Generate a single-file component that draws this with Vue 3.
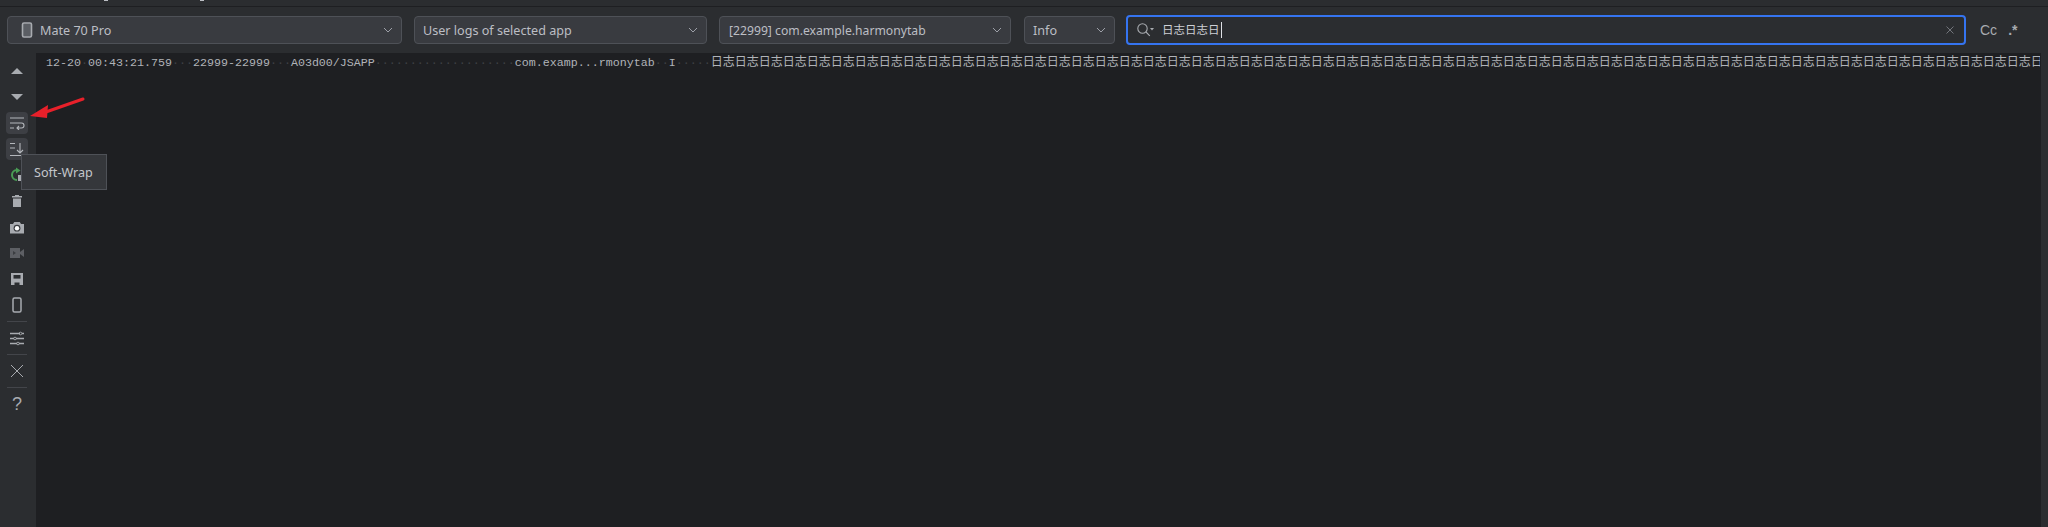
<script setup>
const dots = (n) => '·'.repeat(n);
const logText = '日志'.repeat(60);
</script>

<template>
  <div class="page">
    <div class="topstrip">
      <span class="clip c1"></span>
      <span class="clip c2"></span>
    </div>
    <header class="toolbar">
      <div class="select device">
        <svg class="phone" width="14" height="16" viewBox="0 0 14 16"><rect x="3" y="1.5" width="8" height="13" fill="#5b5e64"/><rect x="2.5" y="1" width="9" height="14" rx="1.5" fill="none" stroke="#a8abb0" stroke-width="1.6"/></svg>
        <span class="label">Mate 70 Pro</span>
        <svg class="chev" width="10" height="6" viewBox="0 0 10 6"><path d="M1 1l4 4 4-4" fill="none" stroke="#9da0a8" stroke-width="1"/></svg>
      </div>
      <div class="select scope">
        <span class="label">User logs of selected app</span>
        <svg class="chev" width="10" height="6" viewBox="0 0 10 6"><path d="M1 1l4 4 4-4" fill="none" stroke="#9da0a8" stroke-width="1"/></svg>
      </div>
      <div class="select proc">
        <span class="label">[22999] com.example.harmonytab</span>
        <svg class="chev" width="10" height="6" viewBox="0 0 10 6"><path d="M1 1l4 4 4-4" fill="none" stroke="#9da0a8" stroke-width="1"/></svg>
      </div>
      <div class="select level">
        <span class="label">Info</span>
        <svg class="chev" width="10" height="6" viewBox="0 0 10 6"><path d="M1 1l4 4 4-4" fill="none" stroke="#9da0a8" stroke-width="1"/></svg>
      </div>
      <div class="search">
        <svg class="mag" width="18" height="14" viewBox="0 0 18 14"><circle cx="5.5" cy="5.5" r="4.7" fill="none" stroke="#a8abb0" stroke-width="1.1"/><path d="M9 9l3.8 3.8" stroke="#a8abb0" stroke-width="1.1"/><path d="M13 5h4l-2 2.4z" fill="#a8abb0"/></svg>
        <span class="query">日志日志日</span><span class="caret"></span>
        <svg class="clear" width="8" height="8" viewBox="0 0 8 8"><path d="M.5.5l7 7M7.5.5l-7 7" stroke="#72757b" stroke-width="1"/></svg>
      </div>
      <span class="opt cc">Cc</span>
      <span class="opt re">.*</span>
    </header>
    <div class="body">
      <aside class="rail">
        <button class="tool t-up"><svg width="16" height="10" viewBox="0 0 16 10"><path d="M2 8l6-6 6 6z" fill="#a8abb0"/></svg></button>
        <button class="tool t-down"><svg width="16" height="10" viewBox="0 0 16 10"><path d="M2 2h12l-6 6z" fill="#a8abb0"/></svg></button>
        <button class="tool t-wrap on"><svg width="16" height="14" viewBox="0 0 16 14"><path d="M1 2h14M1 12h4" stroke="#b4b7bc" stroke-width="1.2" fill="none"/><path d="M1 7h11.5a2.5 2.5 0 0 1 0 5H8M10 10l-2 2 2 2" stroke="#b4b7bc" stroke-width="1.1" fill="none"/></svg></button>
        <button class="tool t-end on"><svg width="16" height="14" viewBox="0 0 16 14"><path d="M1 1.5h5M1 6h5M1 13.5h14" stroke="#b4b7bc" stroke-width="1.2" fill="none"/><path d="M11 1v10M8 8l3 3 3-3" stroke="#b4b7bc" stroke-width="1.1" fill="none"/></svg></button>
        <button class="tool t-restart"><svg width="16" height="16" viewBox="0 0 16 16"><path d="M8 3a5 5 0 1 0 0 10" fill="none" stroke="#499c54" stroke-width="2"/><path d="M7 0.5l4.5 3-4.5 3z" fill="#499c54"/><rect x="9" y="8" width="5" height="6" fill="#a8abb0"/></svg></button>
        <button class="tool t-trash"><svg width="14" height="14" viewBox="0 0 14 14"><path d="M2 2h10v1.5H2z" fill="#a8abb0"/><path d="M5 1h4v1H5z" fill="#a8abb0"/><path d="M3 4.5h8V13H3z" fill="#a8abb0"/></svg></button>
        <button class="tool t-cam"><svg width="16" height="13" viewBox="0 0 16 13"><path d="M1 3h3l1.2-2h5.6L12 3h3v9.5H1z" fill="#a8abb0"/><circle cx="8" cy="7.2" r="3.4" fill="#3a3c40"/><circle cx="8" cy="7.2" r="2.2" fill="#fff"/></svg></button>
        <button class="tool t-video"><svg width="16" height="12" viewBox="0 0 16 12"><rect x="1" y="1" width="10" height="10" fill="#5d5f64"/><path d="M11 5l4-3v8l-4-3z" fill="#5d5f64"/><path d="M4 4l3 2-3 2z" fill="#3b3d41"/></svg></button>
        <button class="tool t-save"><svg width="14" height="14" viewBox="0 0 14 14"><path d="M1 1h12v12H9.5v-2.5h-5V13H1z" fill="#a8abb0"/><rect x="3.5" y="3" width="7" height="3.6" fill="#2b2d30"/></svg></button>
        <button class="tool t-phone"><svg width="12" height="16" viewBox="0 0 12 16"><rect x="2" y="1" width="8" height="14" rx="1.5" fill="none" stroke="#a8abb0" stroke-width="1.5"/></svg></button>
        <span class="rule r1"></span>
        <button class="tool t-sliders"><svg width="16" height="15" viewBox="0 0 16 15"><path d="M1 2.5h10M13 2.5h2M1 7.5h4M7 7.5h8M1 12.5h7M10 12.5h5" stroke="#a8abb0" stroke-width="1.6"/><circle cx="11.5" cy="2.5" r="1.3" fill="none" stroke="#a8abb0" stroke-width=".9"/><circle cx="6" cy="7.5" r="1.3" fill="none" stroke="#a8abb0" stroke-width=".9"/><circle cx="9" cy="12.5" r="1.3" fill="none" stroke="#a8abb0" stroke-width=".9"/></svg></button>
        <span class="rule r2"></span>
        <button class="tool t-close"><svg width="14" height="14" viewBox="0 0 14 14"><path d="M1 1l12 12M13 1L1 13" stroke="#a8abb0" stroke-width="1"/></svg></button>
        <span class="rule r3"></span>
        <button class="tool t-help"><span class="q">?</span></button>
      </aside>
      <main class="log">
        <div class="line"><span>12-20</span><i>{{ dots(1) }}</i><span>00:43:21.759</span><i>{{ dots(3) }}</i><span>22999-22999</span><i>{{ dots(3) }}</i><span>A03d00/JSAPP</span><i>{{ dots(20) }}</i><span>com.examp...rmonytab</span><i>{{ dots(2) }}</i><span>I</span><i>{{ dots(5) }}</i><span class="cjk">{{ logText }}</span></div>
      </main>
      <div class="scrollbar"></div>
    </div>
    <div class="tooltip">Soft-Wrap</div>
    <svg class="arrow" width="60" height="36" viewBox="0 0 60 36"><path d="M54 4L14 18" stroke="#e8202a" stroke-width="3" stroke-linecap="round"/><path d="M1 21l18-11-1 13z" fill="#e8202a"/></svg>
  </div>
</template>

<style scoped>
.page { position: relative; height: 527px; background: #2b2d30; overflow: hidden; font-family: "Noto Sans", "Noto Sans CJK SC", sans-serif; color: #bcbec4; }
.topstrip { height: 6px; background: #2b2d30; border-bottom: 1px solid #1e1f22; position: relative; overflow: hidden; }
.clip { position: absolute; top: 0; width: 4px; height: 1px; background: #bcbec4; }
.c1 { left: 104px; } .c2 { left: 200px; }
.toolbar { height: 46px; display: flex; align-items: center; padding: 0 0 0 7px; box-sizing: border-box; }
.select { height: 28px; box-sizing: border-box; border: 1px solid #4e5157; border-radius: 4px; background: #393b40; display: flex; align-items: center; padding: 0 8px 0 8px; font-size: 12.6px; flex: none; }
.label { flex: 1; white-space: nowrap; overflow: hidden; }
.chev { flex: none; }
.device { width: 395px; margin-right: 12px; padding-left: 12px; }
.phone { margin-right: 6px; flex: none; }
.scope { width: 293px; margin-right: 12px; }
.proc { width: 292px; margin-right: 13px; padding-left: 9px; font-size: 12.2px; }
.level { width: 91px; margin-right: 11px; }
.search { width: 840px; height: 30px; box-sizing: border-box; border: 2px solid #3574f0; border-radius: 4px; background: #2b2d30; display: flex; align-items: center; padding: 0 10px 0 9px; flex: none; font-size: 13px; }
.mag { flex: none; margin-right: 7px; }
.query { line-height: 1; font-size: 11.5px; color: #cdd0d5; }
.caret { width: 1px; height: 16px; background: #dfe1e5; margin-left: 1px; }
.clear { margin-left: auto; }
.opt { color: #a8abb0; flex: none; font-family: "Liberation Sans", sans-serif; }
.cc { margin-left: 14px; font-size: 14px; }
.re { margin-left: 11px; font-size: 14px; font-weight: 700; }
.body { display: flex; height: 474px; }
.rail { width: 36px; flex: none; position: relative; background: #2b2d30; }
.tool { position: absolute; left: 6px; width: 22px; height: 22px; padding: 0; border: 0; background: none; display: flex; align-items: center; justify-content: center; border-radius: 4px; }
.tool.on { background: #3d3f44; }
.t-up { top: 7px; } .t-down { top: 33px; } .t-wrap { top: 59px; } .t-end { top: 85px; } .t-restart { top: 111px; } .t-trash { top: 137px; } .t-cam { top: 163px; } .t-video { top: 189px; } .t-save { top: 215px; } .t-phone { top: 241px; } .t-sliders { top: 274px; } .t-close { top: 307px; } .t-help { top: 340px; }
.rule { position: absolute; left: 7px; width: 20px; height: 1px; background: #43454a; }
.r1 { top: 268px; } .r2 { top: 301px; } .r3 { top: 334px; }
.q { font-size: 18px; color: #a8abb0; font-family: "Liberation Sans", sans-serif; font-weight: 400; line-height: 1; }
.log { flex: 1; background: #1e1f22; overflow: hidden; min-width: 0; }
.line { font-family: "Liberation Mono", monospace; font-size: 11.67px; line-height: 16px; color: #b0b3b8; white-space: pre; padding: 0 0 0 10px; }
.line i { font-style: normal; color: #3f4145; }
.cjk { font-family: "Noto Sans CJK SC", sans-serif; font-size: 12px; }
.scrollbar { width: 8px; flex: none; background: #2b2d30; border-left: 1px solid #1e1f22; box-sizing: border-box; }
.tooltip { position: absolute; left: 21px; top: 154px; width: 86px; height: 36px; box-sizing: border-box; border: 1px solid #4e5157; background: #35373b; display: flex; align-items: center; padding-left: 12px; font-size: 12.6px; color: #c4c7cc; }
.arrow { position: absolute; left: 29px; top: 95px; }
</style>
